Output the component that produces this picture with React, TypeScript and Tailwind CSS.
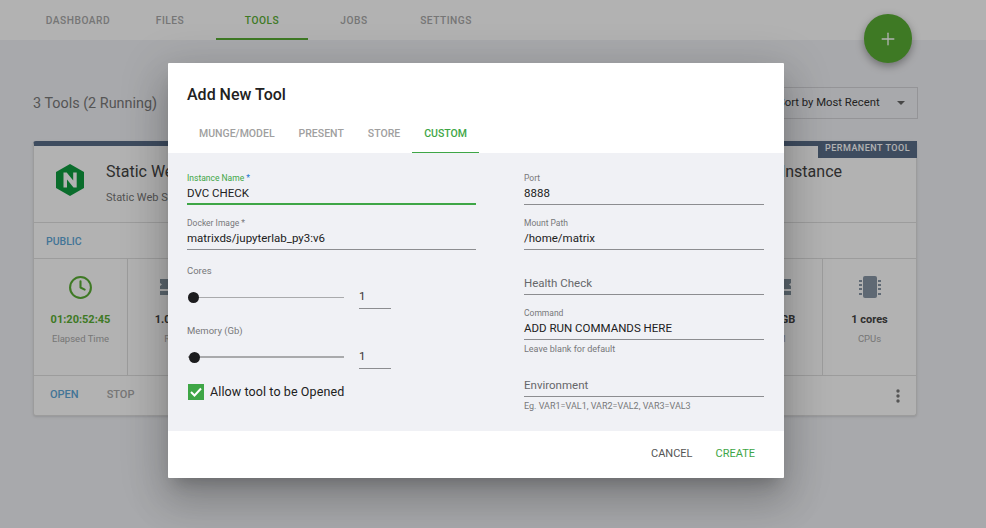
import React from 'react';
import { Clock, Plus } from 'lucide-react';

const navItems = ['DASHBOARD', 'FILES', 'TOOLS', 'JOBS', 'SETTINGS'];
const dialogTabs = ['MUNGE/MODEL', 'PRESENT', 'STORE', 'CUSTOM'];

function NginxLogo() {
  return (
    <svg width="28" height="32" viewBox="0 0 28 32">
      <path d="M14 0 L28 8 V24 L14 32 L0 24 V8 Z" fill="#0f9d3f" />
      <path d="M7.5 8.5 h3.2 L17.2 16.5 V8.5 h3.5 V23.5 h-3.2 L11 15.5 V23.5 H7.5 Z" fill="#fff" />
    </svg>
  );
}

function RamIcon() {
  return (
    <svg width="30" height="16" viewBox="0 0 30 16" fill="#85949f">
      <path d="M0 0 H30 V4 L28 5.5 L30 7 V10 H0 V7 L2 5.5 L0 4 Z" />
      <rect x="0" y="12" width="13" height="4" />
      <rect x="17" y="12" width="13" height="4" />
    </svg>
  );
}

function ChipIcon() {
  const pins = [4, 8, 12, 17];
  return (
    <svg width="22" height="22" viewBox="0 0 22 22" fill="#8897a6">
      <rect x="4" y="0" width="14" height="22" rx="2" />
      {pins.map((y) => (
        <g key={y}>
          <rect x="0" y={y} width="3" height="2" />
          <rect x="19" y={y} width="3" height="2" />
        </g>
      ))}
    </svg>
  );
}

function Stat({ icon, value, label, green }: { icon: React.ReactNode; value: string; label: string; green?: boolean }) {
  return (
    <div className="w-[93px] flex flex-col items-center pt-[16px]">
      <div className="h-[24px] flex items-center justify-center">{icon}</div>
      <div className={`mt-[13px] text-[11px] font-bold leading-[16px] ${green ? 'text-[#5aae34]' : 'text-[#444]'}`}>{value}</div>
      <div className="mt-[4px] text-[9.5px] leading-[14px] text-[#aaa]">{label}</div>
    </div>
  );
}

function Field({ label, value, active, placeholder }: { label?: string; value?: string; active?: boolean; placeholder?: string }) {
  return (
    <div className={`h-[34px] flex flex-col ${active ? 'border-b-2 border-[#3ea646]' : 'border-b border-[#8c8d90]'}`}>
      <div className={`h-[12px] pt-[2px] text-[8.5px] leading-[10px] ${active ? 'text-[#3ea646]' : 'text-[#77787a]'}`}>
        {label}
        {active && <span className="text-[#1976d2]"> *</span>}
      </div>
      <div className={`text-[11.5px] leading-[20px] ${placeholder ? 'text-[#66676a]' : 'text-[#212121]'}`}>{value || placeholder}</div>
    </div>
  );
}

function SliderRow({ thick }: { thick?: boolean }) {
  return (
    <div className="flex items-center h-[24px]">
      <div className="relative w-[156px] ml-[1px] flex items-center">
        <div className={`w-full bg-[#a9aaac] ${thick ? 'h-[2px]' : 'h-px'}`} />
        <div className={`absolute w-[11px] h-[11px] rounded-full bg-[#1c1c1e] ${thick ? 'left-px' : 'left-0'}`} />
      </div>
      <div className="ml-[15px] w-[32px] h-[24px] border-b border-[#8c8d90] text-[11.5px] leading-[22px] text-[#333]">1</div>
    </div>
  );
}

export default function App() {
  return (
    <div className="relative w-[986px] h-[528px] overflow-hidden bg-[#f1f2f6] font-['Roboto',sans-serif]">
      <div className="h-[40px] bg-white flex pl-[32px]">
        {navItems.map((item) => (
          <div
            key={item}
            className={`w-[92px] h-full flex items-center justify-center pt-[3px] text-[10.2px] font-medium tracking-[0.5px] border-b-2 ${
              item === 'TOOLS' ? 'text-[#5aae34] border-[#5aae34]' : 'text-[#a9a9a9] border-transparent'
            }`}
          >
            {item}
          </div>
        ))}
      </div>

      <div className="absolute top-[14px] right-[74px] w-[48px] h-[49px] rounded-full bg-[#5aae34] flex items-center justify-center shadow-[0_3px_8px_rgba(0,0,0,0.35)]">
        <Plus size={20} color="#fff" strokeWidth={1.6} />
      </div>

      <div className="pl-[33px] w-[918px]">
        <div className="mt-[47px] h-[32px] flex items-center justify-between">
          <div className="pt-[2px] text-[14.4px] text-[#7a7a7a]">3 Tools (2 Running)</div>
          <div className="w-[170px] h-[32px] border border-[#d4d5d8] flex items-center justify-between pl-[29px] pr-[12px] text-[11.3px] text-[#333]">
            <span>Sort by Most Recent</span>
            <span className="w-0 h-0 border-x-[4px] border-x-transparent border-t-[4px] border-t-[#666]" />
          </div>
        </div>

        <div className="relative mt-[22px] w-[884px] h-[275px] bg-white rounded-[3px] border-x border-b border-[#e0e0e0] border-t-[5px] border-t-[#5a6d89] shadow-sm flex flex-col">
          <div className="absolute top-[-5px] right-[-1px] h-[17px] w-[99px] bg-[#5a6d89] text-white text-[9px] font-medium tracking-[0.5px] leading-[15px] text-center">
            PERMANENT TOOL
          </div>
          <div className="h-[77px] flex justify-between border-b border-[#e0e0e0] pl-[22px] pr-[74px]">
            <div className="flex pt-[18px]">
              <NginxLogo />
              <div className="ml-[22px] mt-[-2px] whitespace-nowrap">
                <div className="text-[16px] leading-[20px] text-[#444]">Static Web</div>
                <div className="mt-[9px] text-[11px] leading-[14px] text-[#777]">Static Web Se</div>
              </div>
            </div>
            <div className="pt-[16px] text-[16px] leading-[20px] text-[#444]">Jupyter Instance</div>
          </div>
          <div className="h-[36px] flex items-center border-b border-[#e0e0e0] pl-[12px] pt-[2px] text-[10.5px] font-medium text-[#5fa8d8]">PUBLIC</div>
          <div className="h-[117px] flex justify-between border-b border-[#e0e0e0]">
            <div className="flex">
              <div className="border-r border-[#e0e0e0]">
                <Stat icon={<Clock size={25} color="#5aae34" strokeWidth={2} />} value="01:20:52:45" label="Elapsed Time" green />
              </div>
              <Stat icon={<RamIcon />} value="1.00 GB" label="RAM" />
            </div>
            <div className="flex">
              <div className="border-r border-[#e0e0e0]">
                <Stat icon={<RamIcon />} value="1.00 GB" label="RAM" />
              </div>
              <Stat icon={<ChipIcon />} value="1 cores" label="CPUs" />
            </div>
          </div>
          <div className="flex-1 flex items-center justify-between pl-[16px] pr-[16px] text-[11px] font-medium">
            <div className="flex gap-[28px]">
              <span className="text-[#5fa8d8]">OPEN</span>
              <span className="text-[#aaa]">STOP</span>
            </div>
            <svg width="4" height="14" viewBox="0 0 4 14" fill="#7a7a7a">
              <circle cx="2" cy="2" r="1.7" />
              <circle cx="2" cy="7" r="1.7" />
              <circle cx="2" cy="12" r="1.7" />
            </svg>
          </div>
        </div>
      </div>

      <div className="absolute inset-0 bg-black/30 flex pl-[168px] pt-[63px]">
        <div className="w-[616px] h-[415px] bg-white flex flex-col rounded-[1px] shadow-[0_11px_15px_-7px_rgba(0,0,0,0.2),0_24px_38px_3px_rgba(0,0,0,0.14),0_9px_46px_8px_rgba(0,0,0,0.12)]">
          <div className="h-[90px] flex flex-col">
            <div className="pl-[19px] pt-[21px] text-[16px] leading-[22px] font-medium text-[#212121]">Add New Tool</div>
            <div className="mt-auto flex pl-[19px] h-[37px]">
              {dialogTabs.map((tab) => (
                <div
                  key={tab}
                  className={`px-[12px] h-full flex items-center justify-center text-[10.5px] font-medium border-b ${
                    tab === 'CUSTOM' ? 'text-[#3ea646] border-[#3ea646]' : 'text-[#a0a0a0] border-transparent'
                  }`}
                >
                  {tab}
                </div>
              ))}
            </div>
          </div>

          <div className="h-[278px] bg-[#f0f1f5] flex pl-[19px] pt-[18px] gap-[48px]">
            <div className="w-[289px] flex flex-col">
              <Field label="Instance Name" value="DVC CHECK" active />
              <div className="mt-[11px]">
                <Field label="Docker Image *" value="matrixds/jupyterlab_py3:v6" />
              </div>
              <div className="mt-[14px] text-[9.5px] leading-[14px] text-[#77787a]">Cores</div>
              <div className="mt-[7px]"><SliderRow /></div>
              <div className="mt-[15px] text-[9.5px] leading-[14px] text-[#77787a]">Memory (Gb)</div>
              <div className="mt-[7px]"><SliderRow thick /></div>
              <div className="mt-[15px] flex items-center h-[16px] pl-px">
                <div className="w-[16px] h-[16px] bg-[#3ea646] flex items-center justify-center">
                  <svg width="12" height="10" viewBox="0 0 12 10" fill="none">
                    <path d="M1 5 L4.5 8.5 L11 1.5" stroke="#fff" strokeWidth="2" />
                  </svg>
                </div>
                <span className="ml-[6px] text-[12.5px] tracking-[0.1px] text-[#212121]">Allow tool to be Opened</span>
              </div>
            </div>

            <div className="w-[240px] flex flex-col">
              <Field label="Port" value="8888" />
              <div className="mt-[11px]"><Field label="Mount Path" value="/home/matrix" /></div>
              <div className="mt-[11px]"><Field placeholder="Health Check" /></div>
              <div className="mt-[11px]"><Field label="Command" value="ADD RUN COMMANDS HERE" /></div>
              <div className="mt-[3px] text-[9px] leading-[12px] text-[#77787a]">Leave blank for default</div>
              <div className="mt-[8px]"><Field placeholder="Environment" /></div>
              <div className="mt-[3px] text-[9px] leading-[12px] text-[#77787a]">Eg. VAR1=VAL1, VAR2=VAL2, VAR3=VAL3</div>
            </div>
          </div>

          <div className="flex-1 flex items-center justify-end gap-[23px] pr-[29px] text-[11px]">
            <span className="text-[#555]">CANCEL</span>
            <span className="text-[#3ea646]">CREATE</span>
          </div>
        </div>
      </div>
    </div>
  );
}
